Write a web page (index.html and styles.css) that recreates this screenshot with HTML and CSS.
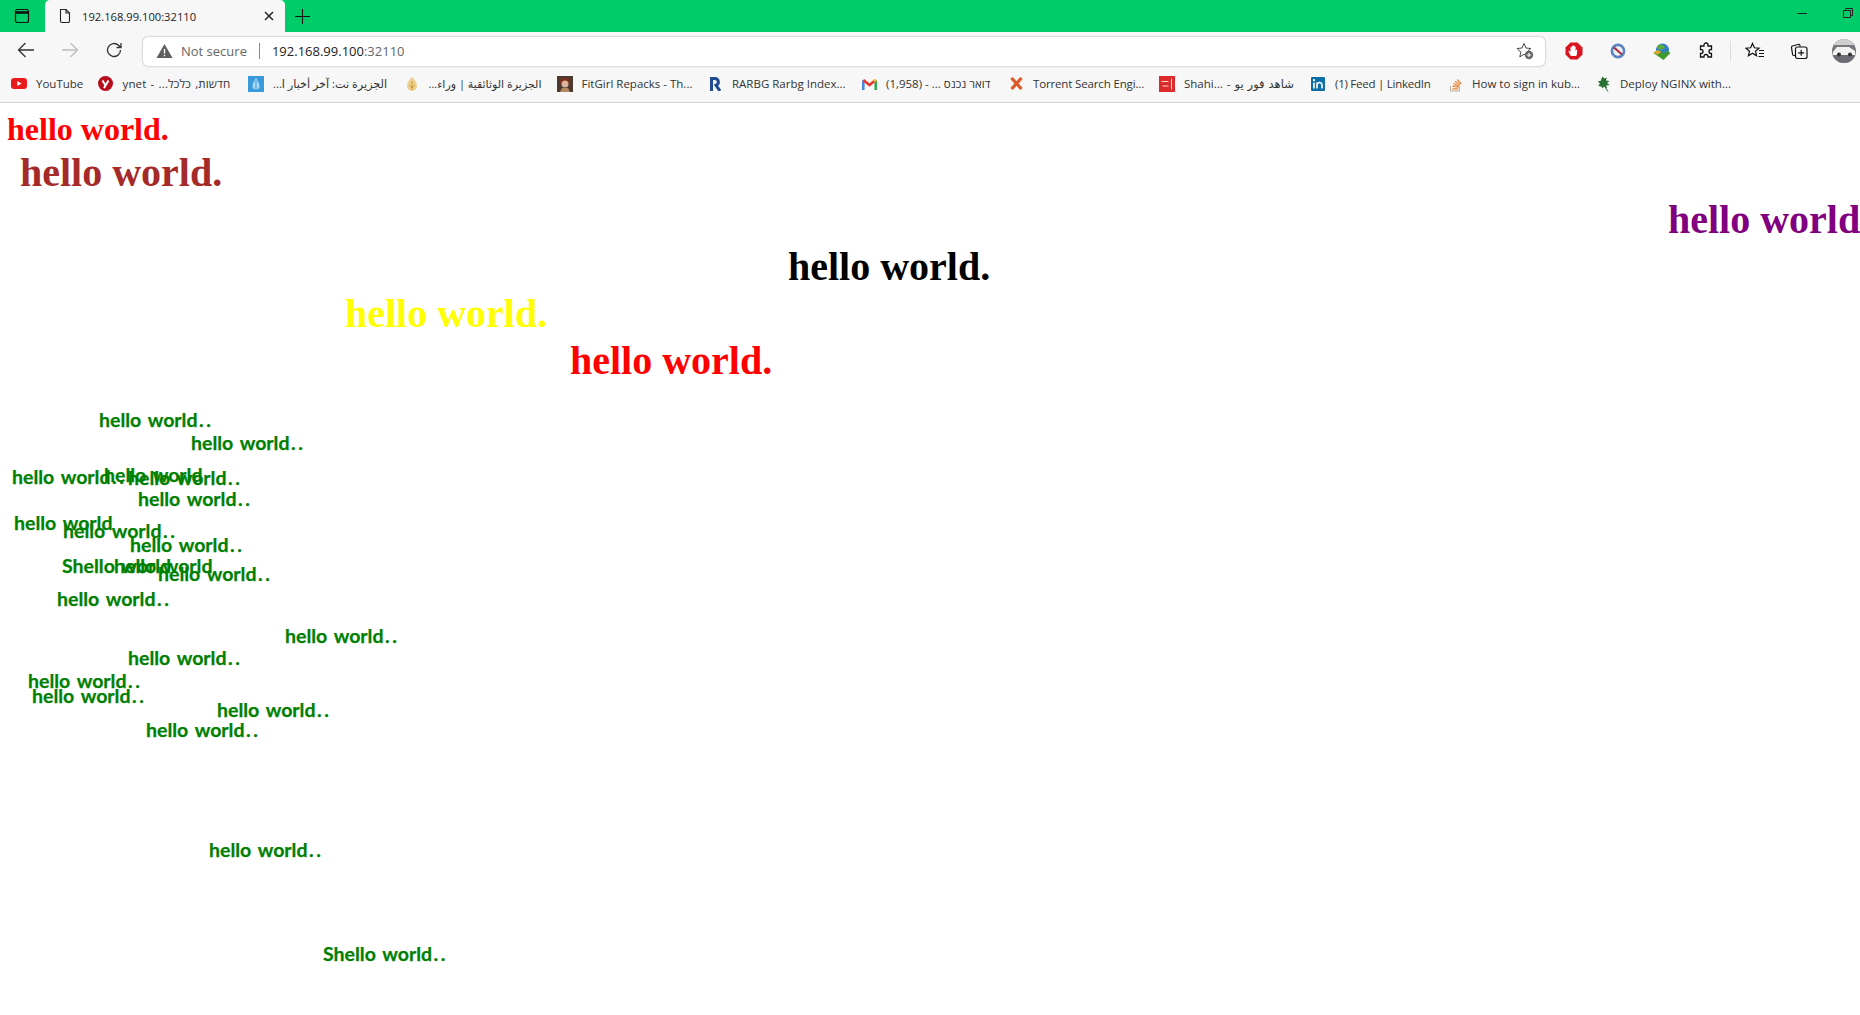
FILE: index.html
```html
<!DOCTYPE html>
<html lang="en">
<head>
<meta charset="utf-8">
<title>192.168.99.100:32110</title>
<link rel="stylesheet" href="styles.css">
</head>
<body>
<header class="browser">
  <div class="titlebar">
    <button class="tb-btn tabs-btn"><svg width="16" height="16" viewBox="0 0 16 16" fill="none" stroke="#111" stroke-width="1.2"><rect x="1.500" y="1.500" width="13" height="13" rx="2"/><path d="M1.500 4.500h13" stroke-width="2.600"/></svg></button>
    <div class="tab">
      <svg width="16" height="16" viewBox="0 0 16 16" fill="none" stroke="#222" stroke-width="1.1"><path d="M3.500 1.500h5.500l3.500 3.500v8a1.500 1.500 0 0 1-1.500 1.500H5a1.500 1.500 0 0 1-1.500-1.500z"/><path d="M9 1.500v3.500h3.500"/></svg>
      <span class="tab-title">192.168.99.100:32110</span>
      <svg class="tab-close" width="10" height="10" viewBox="0 0 10 10" stroke="#222" stroke-width="1.5"><path d="M1 1l8 8M9 1l-8 8"/></svg>
    </div>
    <svg class="newtab" width="15" height="15" viewBox="0 0 15 15" stroke="#111" stroke-width="1.1"><path d="M7.500 0v15M0 7.500h15"/></svg>
    <div class="win-ctrl">
      <svg width="10" height="10" viewBox="0 0 10 10" stroke="#222"><path d="M0 5.500h10"/></svg>
      <svg width="10" height="10" viewBox="0 0 10 10" fill="none" stroke="#222"><path d="M.5 2.500h7v7h-7zM2.500 2.500v-2h7v7h-2"/></svg>
    </div>
  </div>
  <div class="toolbar">
    <svg class="nav" width="18" height="18" viewBox="0 0 18 18" fill="none" stroke="#333" stroke-width="1.3"><path d="M17 9H1.500M8.500 2L1.500 9l7 7"/></svg>
    <svg class="nav" width="18" height="18" viewBox="0 0 18 18" fill="none" stroke="#bdbdbd" stroke-width="1.3"><path d="M1 9h15.500M9.500 2l7 7-7 7"/></svg>
    <svg class="nav" width="18" height="18" viewBox="0 0 18 18" fill="none" stroke="#333" stroke-width="1.3"><path d="M15.500 9a6.500 6.500 0 1 1-2-4.700L16 6.500M16 2v4.500h-4.500"/></svg>
    <div class="omnibox">
      <svg width="17" height="16" viewBox="0 0 17 16"><path d="M8.500 1L16.500 15H.5z" fill="#5f5f5f"/><path d="M8.500 6v4.500M8.500 11.700v1.500" stroke="#fff" stroke-width="1.4"/></svg>
      <span class="not-secure">Not secure</span>
      <span class="sep"></span>
      <span class="url">192.168.99.100<span class="port">:32110</span></span>
      <svg class="star-add" width="18" height="18" viewBox="0 0 18 18"><path d="M8 1.500l2 4.500 4.800.5-3.600 3.200 1 4.700L8 12.300l-4.200 2.600 1-4.700L1.200 6.500 6 6z" fill="none" stroke="#444"/><circle cx="13" cy="13" r="4.200" fill="#666"/><path d="M13 10.800v4.400M10.800 13h4.400" stroke="#fff"/></svg>
    </div>
    <div class="ext">
      <span class="ext-cell"><svg width="18" height="18" viewBox="0 0 18 18"><path d="M5.500 .5h7l5 5v7l-5 5h-7l-5-5v-7z" fill="#d9141e"/><path d="M5.500 13.500L3.600 9.700c-.4-.8.600-1.300 1.100-.6l.8 1V5.600c0-.9 1.200-.9 1.200 0V8.500V4.300c0-.9 1.300-.9 1.300 0v4.200V4c0-.9 1.300-.9 1.300 0v4.500V5c0-.9 1.300-.9 1.300 0v4l.5-.9c.5-.8 1.400-.3 1.100.5L11.800 13c-.3.7-.8 1-1.500 1H6.700c-.5 0-1-.2-1.200-.5z" fill="#fff"/></svg></span>
      <span class="ext-cell"><svg width="16" height="16" viewBox="0 0 16 16" fill="none"><circle cx="8" cy="8" r="6" stroke="#5b84c4" stroke-width="2.800"/><circle cx="8" cy="8" r="4.500" fill="#eee"/><path d="M4 4.500l8 7" stroke="#a83040" stroke-width="2.200"/></svg></span>
      <span class="ext-cell"><svg width="18" height="17" viewBox="0 0 18 17"><circle cx="9.500" cy="7" r="6.500" fill="#2f7fc9"/><path d="M5 2c3-1 7 0 7 3l-4 2-4-2z" fill="#58ad3a"/><path d="M.5 10C3 7 6 6 9 9l1.500 2L14 7.500l3.500 2.500-7 7z" fill="#3f9a2e"/><path d="M.5 10C3 7 6 6 8 9l-3 2.500z" fill="#e2a52d"/></svg></span>
      <span class="ext-cell"><svg width="18" height="18" viewBox="0 0 18 18" fill="none" stroke="#111" stroke-width="1.300"><path d="M7 3a2 2 0 0 1 4 0v1h3.500v3.500H14a2 2 0 0 0 0 4h.5V15H11v-.5a2 2 0 0 0-4 0v.5H3.500v-3.500H4a2 2 0 0 0 0-4h-.5V4H7z"/></svg></span>
      <span class="ext-sep"></span>
      <span class="ext-cell"><svg width="20" height="18" viewBox="0 0 20 18" fill="none" stroke="#111" stroke-width="1.200"><path d="M7.500 1.500l1.900 4.300 4.600.4-3.500 3 1 4.500-4-2.400-4 2.400 1-4.500-3.500-3 4.600-.4zM14 8.500h5M14 11.500h5M13.500 14.500h5.500"/></svg></span>
      <span class="ext-cell"><svg width="18" height="18" viewBox="0 0 18 18" fill="none" stroke="#111" stroke-width="1.200"><path d="M5 13.500H4a1.500 1.500 0 0 1-1.500-1.500L1.500 5.500c-.1-.8.400-1.300 1-1.500L8 2.500c1-.3 1.800.2 2 1l.3 1"/><rect x="5.500" y="5" width="11.500" height="11.500" rx="2"/><path d="M11.200 7.800v6M8.200 10.800h6"/></svg></span>
      <svg class="avatar" width="24" height="24" viewBox="0 0 24 24"><defs><clipPath id="av"><circle cx="12" cy="12" r="12"/></clipPath></defs><g clip-path="url(#av)"><rect width="24" height="24" fill="#77787e"/><rect width="24" height="6" fill="#cfcfd0"/><path d="M1 13l4-5h12l6 4v4H1z" fill="#f2f2f3"/><rect y="16" width="24" height="8" fill="#6b6c74"/><circle cx="7" cy="15.500" r="2" fill="#333"/><circle cx="18" cy="15.500" r="2" fill="#333"/></g></svg>
    </div>
  </div>
  <nav class="bookmarks">
    <a class="bm bm1"><svg width="16" height="11" viewBox="0 0 16 11"><rect width="16" height="11" rx="3" fill="#e81c1c"/><path d="M6.300 3v5L10.500 5.500z" fill="#fff"/></svg><span>YouTube</span></a>
    <a class="bm bm2"><svg width="15" height="15" viewBox="0 0 15 15"><circle cx="7.500" cy="7.500" r="7.500" fill="#b80d1d"/><path d="M4.500 4.500l3 5M10.500 4.500L6 12" stroke="#fff" stroke-width="2" fill="none"/></svg><span>ynet - ...חדשות, כלכל</span></a>
    <a class="bm bm3"><svg width="16" height="16" viewBox="0 0 16 16"><rect width="16" height="16" fill="#3a9bdc"/><path d="M8 2c1.500 3 3.500 5 3.500 8a3.500 3.500 0 0 1-7 0C4.500 7 6.500 5 8 2z" fill="#a9d8f3"/><path d="M8 4v9" stroke="#3a9bdc"/></svg><span dir="rtl">الجزيرة نت: آخر أخبار ا...</span></a>
    <a class="bm bm4"><svg width="12" height="16" viewBox="0 0 12 16"><path d="M6 1c3 3 5 6 5 9a5 5 0 0 1-10 0c0-3 2-6 5-9z" fill="#ecd08f"/><path d="M6 5v9M3.500 9.500L6 12l2.500-2.500" stroke="#c99a3c" fill="none"/></svg><span dir="rtl">الجزيرة الوثائقية | وراء...</span></a>
    <a class="bm bm5"><svg width="16" height="16" viewBox="0 0 16 16"><rect width="16" height="16" fill="#4a3a30"/><path d="M3 4c2-3 8-3 10 0v4H3z" fill="#7a2f1e"/><circle cx="8" cy="8" r="3.500" fill="#d8b49a"/><path d="M3 16l2-4h6l2 4z" fill="#b2895f"/></svg><span>FitGirl Repacks - Th...</span></a>
    <a class="bm bm6"><svg width="12" height="14" viewBox="0 0 12 14"><path d="M2.500 14V1.500h3.500a3.500 3.500 0 0 1 1 6.800L11 14" fill="none" stroke="#1f4a90" stroke-width="3"/></svg><span>RARBG Rarbg Index...</span></a>
    <a class="bm bm7"><svg width="15" height="12" viewBox="0 0 15 12" fill="none" stroke-width="2.600"><path d="M1.300 12V2.500" stroke="#4a86e8"/><path d="M13.700 12V2.500" stroke="#35a853"/><path d="M1.300 2l6.200 5 6.200-5" stroke="#e33b2e"/><path d="M12 3.300l1.700-1.300" stroke="#f8bc1c"/></svg><span>(1,958) - ... דואר נכנס</span></a>
    <a class="bm bm8"><svg width="13" height="13" viewBox="0 0 13 13" stroke="#dc5a2c" stroke-width="3.200"><path d="M1.500 1l10 11M11.500 1l-10 11"/></svg><span>Torrent Search Engi...</span></a>
    <a class="bm bm9"><svg width="16" height="16" viewBox="0 0 16 16"><rect width="16" height="16" fill="#dc2b2b"/><path d="M2.500 5.500h7M3.500 10h6M12.500 2.500v11" stroke="#f8d6d0"/></svg><span>Shahi... - شاهد فور يو</span></a>
    <a class="bm bm10"><svg width="14" height="14" viewBox="0 0 14 14"><rect width="14" height="14" rx="1" fill="#0d6fa8"/><path d="M3 5.500V11.500M6 11.500V5.500M6 8c0-3 5-3.500 5 0v3.500" stroke="#fff" stroke-width="1.600" fill="none"/><circle cx="3" cy="3.200" r="1.100" fill="#fff"/></svg><span>(1) Feed | LinkedIn</span></a>
    <a class="bm bm11"><svg width="13" height="16" viewBox="0 0 13 16" fill="none"><path d="M1.500 10v5h9v-5" stroke="#b8afa3"/><path d="M3.300 12.800h6M3.500 10l6 1M4.500 7.500l5.500 2.500M6 5.300l4.800 3.700M8.300 3.500l3.800 4.500" stroke="#e8873a" stroke-width="1.300"/></svg><span>How to sign in kub...</span></a>
    <a class="bm bm12"><svg width="13" height="16" viewBox="0 0 13 16"><path d="M5.500 .5L7.300 2.500 9.800 1.500 9 4.500 12.500 5 10 7l2.800 2-3.600.5.900 3-3.400-2-.9 2L4 10.500 1.200 9.800 3 7.800.8 5.200 3.500 5z" fill="#2a6f34"/><path d="M4.500 5.500l6.500 10" stroke="#2a6f34"/></svg><span>Deploy NGINX with...</span></a>
  </nav>
</header>
<main class="page">
  <h1 class="line small red">hello world.</h1>
  <h1 class="line brown">hello world.</h1>
  <h1 class="line purple">hello world.</h1>
  <h1 class="line black">hello world.</h1>
  <h1 class="line yellow">hello world.</h1>
  <h1 class="line red at-570">hello world.</h1>
  <span class="g g1">hello world<span class="dots">..</span></span>
  <span class="g g2">hello world<span class="dots">..</span></span>
  <span class="g g3">hello world<span class="dots">..</span></span>
  <span class="g g4">hello world</span>
  <span class="g g5">hello world<span class="dots">..</span></span>
  <span class="g g6">hello world<span class="dots">..</span></span>
  <span class="g g7">hello world</span>
  <span class="g g8">hello world<span class="dots">..</span></span>
  <span class="g g9">hello world<span class="dots">..</span></span>
  <span class="g g10">Shello world</span>
  <span class="g g11">hello world</span>
  <span class="g g12">hello world<span class="dots">..</span></span>
  <span class="g g13">hello world<span class="dots">..</span></span>
  <span class="g g14">hello world<span class="dots">..</span></span>
  <span class="g g15">hello world<span class="dots">..</span></span>
  <span class="g g16">hello world<span class="dots">..</span></span>
  <span class="g g17">hello world<span class="dots">..</span></span>
  <span class="g g18">hello world<span class="dots">..</span></span>
  <span class="g g19">hello world<span class="dots">..</span></span>
  <span class="g g20">hello world<span class="dots">..</span></span>
  <span class="g g21">Shello world<span class="dots">..</span></span>
</main>
</body>
</html>
```

FILE: styles.css
```css
* { box-sizing: border-box; }
html, body { margin: 0; height: 100%; overflow: hidden; background: #fff; }
body { font-family: "Open Sans", "Noto Sans", "DejaVu Sans", sans-serif; }

.browser { display: flex; flex-direction: column; height: 103px; background: #f7f7f7; border-bottom: 1px solid #d4d4d4; }

.titlebar { display: flex; align-items: center; height: 32px; background: #00cc69; flex: none; }
.tb-btn { width: 45px; height: 32px; border: 0; padding: 0 0 0 14px; background: transparent; display: flex; align-items: center; }
.tab { width: 240px; height: 32px; background: #f7f7f7; border-radius: 5px 5px 0 0; display: flex; align-items: center; padding: 0 11px 0 12px; gap: 9px; }
.tab-title { flex: 1; font-size: 11.2px; color: #222; }
.newtab { margin-left: 10px; }
.win-ctrl { margin-left: auto; display: flex; gap: 36px; padding: 0 7px 6px 0; }

.toolbar { display: flex; align-items: center; height: 36px; flex: none; padding-left: 17px; }
.nav { margin-right: 26px; flex: none; }
.toolbar .nav:nth-child(3) { margin-right: 20px; }
.omnibox { width: 1402px; height: 29px; margin-top: 2px; background: #fff; border-radius: 5px; box-shadow: 0 0 2px rgba(0,0,0,.4); display: flex; align-items: center; padding: 0 11px 0 13px; flex: none; }
.not-secure { margin-left: 8px; font-size: 13px; color: #666; }
.sep { width: 1px; height: 16px; background: #888; margin: 0 12px; }
.url { font-size: 13px; color: #222; flex: 1; }
.port { color: #666; }
.ext { display: flex; align-items: center; flex: 1; margin: 2px 0 0 7px; }
.ext-cell { width: 44px; display: flex; justify-content: center; align-items: center; flex: none; }
.ext-sep { width: 1px; height: 20px; background: #ddd; margin: 0 2px; flex: none; }
.avatar { margin-left: 11px; flex: none; }

.bookmarks { display: flex; align-items: center; height: 34px; flex: none; padding: 0 0 3px 11px; font-size: 11.5px; color: #333; }
.bm { display: grid; grid-template-columns: 16px auto; column-gap: 9px; align-items: center; justify-content: start; justify-items: center; white-space: nowrap; flex: none; }
.bm span { justify-self: start; }
.bm1 { width: 86.5px; }
.bm2 { width: 150.5px; }
.bm3 { width: 155.500px; }
.bm4 { width: 153px; }
.bm5 { width: 150.5px; }
.bm6 { width: 154px; }
.bm7 { width: 147px; }
.bm8 { width: 151px; }
.bm9 { width: 151px; }
.bm10 { width: 137px; }
.bm11 { width: 148px; }
.bm2 span { word-spacing: 1px; letter-spacing: .15px; }
.bm3 span { font-size: 11.2px; }
.bm4 span { font-size: 11px; }
.bm8 span { letter-spacing: -.15px; }
.bm9 span { word-spacing: 1px; }
.bm10 span { letter-spacing: -.25px; }

.page { position: relative; height: 912px; padding-top: 7px; overflow: hidden; }
.line { margin: 0; font-family: "Liberation Serif", serif; font-weight: 700; font-size: 40px; line-height: 47px; white-space: nowrap; }
.small { font-size: 32px; line-height: 39px; margin-left: 7px; }
.red { color: #ff0000; }
.brown { color: #a52a2a; margin-left: 20px; }
.purple { color: #800080; margin-left: 1668px; }
.black { color: #000; margin-left: 788px; }
.yellow { color: #ffff00; margin-left: 345px; }
.at-570 { margin-left: 570px; }

.g { position: absolute; margin-top: -1px; font-family: "Lato", "Open Sans", sans-serif; font-weight: 700; font-size: 19.5px; line-height: 24px; color: #008000; white-space: nowrap; word-spacing: 2px; -webkit-text-stroke: .25px #008000; }
.dots { letter-spacing: 2.5px; margin-left: 1.5px; }
.g1 { left: 99px; top: 306px; }
.g2 { left: 191px; top: 329px; }
.g3 { left: 12px; top: 363px; }
.g4 { left: 104px; top: 361px; }
.g5 { left: 128px; top: 364px; }
.g6 { left: 138px; top: 385px; }
.g7 { left: 14px; top: 409px; }
.g8 { left: 63px; top: 417px; }
.g9 { left: 130px; top: 431px; }
.g10 { left: 62px; top: 452px; }
.g11 { left: 114px; top: 452px; }
.g12 { left: 158px; top: 460px; }
.g13 { left: 57px; top: 485px; }
.g14 { left: 285px; top: 522px; }
.g15 { left: 128px; top: 544px; }
.g16 { left: 28px; top: 567px; }
.g17 { left: 32px; top: 582px; }
.g18 { left: 217px; top: 596px; }
.g19 { left: 146px; top: 616px; }
.g20 { left: 209px; top: 736px; }
.g21 { left: 323px; top: 840px; }
```
